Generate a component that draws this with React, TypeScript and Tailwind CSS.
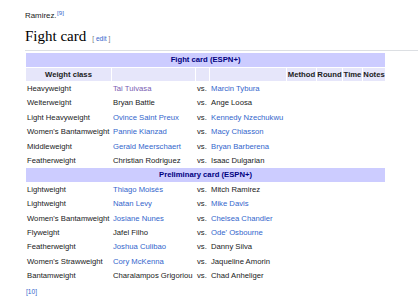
const LINK = "text-[#3366cc]";
const VISITED = "text-[#795cb2]";

type Fighter = { name: string; link?: boolean; visited?: boolean };
type Bout = { weight: string; a: Fighter; b: Fighter };

const main: Bout[] = [
  { weight: "Heavyweight", a: { name: "Tai Tuivasa", visited: true }, b: { name: "Marcin Tybura", link: true } },
  { weight: "Welterweight", a: { name: "Bryan Battle" }, b: { name: "Ange Loosa" } },
  { weight: "Light Heavyweight", a: { name: "Ovince Saint Preux", link: true }, b: { name: "Kennedy Nzechukwu", link: true } },
  { weight: "Women's Bantamweight", a: { name: "Pannie Kianzad", link: true }, b: { name: "Macy Chiasson", link: true } },
  { weight: "Middleweight", a: { name: "Gerald Meerschaert", link: true }, b: { name: "Bryan Barberena", link: true } },
  { weight: "Featherweight", a: { name: "Christian Rodriguez" }, b: { name: "Isaac Dulgarian" } },
];

const prelims: Bout[] = [
  { weight: "Lightweight", a: { name: "Thiago Moisés", link: true }, b: { name: "Mitch Ramirez" } },
  { weight: "Lightweight", a: { name: "Natan Levy", link: true }, b: { name: "Mike Davis", link: true } },
  { weight: "Women's Bantamweight", a: { name: "Josiane Nunes", link: true }, b: { name: "Chelsea Chandler", link: true } },
  { weight: "Flyweight", a: { name: "Jafel Filho" }, b: { name: "Ode' Osbourne", link: true } },
  { weight: "Featherweight", a: { name: "Joshua Culibao", link: true }, b: { name: "Danny Silva" } },
  { weight: "Women's Strawweight", a: { name: "Cory McKenna", link: true }, b: { name: "Jaqueline Amorin" } },
  { weight: "Bantamweight", a: { name: "Charalampos Grigoriou" }, b: { name: "Chad Anheliger" } },
];

function Name({ f }: { f: Fighter }) {
  const color = f.visited ? VISITED : f.link ? LINK : "text-[#202122]";
  return <span className={color}>{f.name}</span>;
}

function BoutRow({ bout }: { bout: Bout }) {
  return (
    <tr className="h-[13.4px]">
      <td className="pl-[1px] whitespace-nowrap">{bout.weight}</td>
      <td className="pl-[1px] whitespace-nowrap"><Name f={bout.a} /></td>
      <td className="pl-[1px] text-[#202122]">vs.</td>
      <td className="pl-[1px] whitespace-nowrap"><Name f={bout.b} /></td>
      <td />
      <td />
      <td />
      <td />
    </tr>
  );
}

function SectionRow({ title }: { title: string }) {
  return (
    <tr className="h-[13.4px]">
      <th colSpan={8} className="bg-[#ccccff] text-[#000080] font-bold text-center">
        {title}
      </th>
    </tr>
  );
}

export default function App() {
  return (
    <div className="w-[418px] h-[300px] overflow-hidden bg-white pl-[25px] font-['Liberation_Sans',Arial,sans-serif] text-[#202122]">
      <p className="mt-[10px] text-[7.9px] leading-[12px]">
        Ramirez.
        <sup className={`${LINK} text-[6.2px] ml-[0.5px]`}>[9]</sup>
      </p>

      {/* section heading */}
      <h2 className="mt-[5px] pb-[2px] border-b border-[#dcdfe3] font-['Liberation_Serif',serif] text-[15px] leading-[18px] text-black flex items-baseline">
        Fight card
        <span className="ml-[6px] text-[6.6px] font-['Liberation_Sans',sans-serif] text-[#72777d]">
          [ <span className={LINK}>edit</span> ]
        </span>
      </h2>

      <table className="mt-[1px] border-separate border-spacing-[1px] table-fixed text-[7.7px] leading-[9px] w-[361px]">
        <colgroup>
          <col className="w-[85px]" />
          <col className="w-[83px]" />
          <col className="w-[13px]" />
          <col className="w-[76px]" />
          <col className="w-[29px]" />
          <col className="w-[25px]" />
          <col className="w-[19px]" />
          <col className="w-[22px]" />
        </colgroup>
        <thead>
          <tr className="h-[13.5px]">
            <th colSpan={8} className="bg-[#ccccff] text-[#000080] font-bold text-center">
              Fight card (ESPN+)
            </th>
          </tr>
          <tr className="h-[13.4px]">
            <th className="bg-[#e6e6fa] font-bold text-center">Weight class</th>
            <th className="bg-[#e6e6fa]" />
            <th className="bg-[#e6e6fa]" />
            <th className="bg-[#e6e6fa]" />
            <th className="bg-[#e6e6fa] font-bold text-center">Method</th>
            <th className="bg-[#e6e6fa] font-bold text-center">Round</th>
            <th className="bg-[#e6e6fa] font-bold text-center">Time</th>
            <th className="bg-[#e6e6fa] font-bold text-center">Notes</th>
          </tr>
        </thead>
        <tbody>
          {main.map((b, i) => (
            <BoutRow key={"m" + i} bout={b} />
          ))}
          <SectionRow title="Preliminary card (ESPN+)" />
          {prelims.map((b, i) => (
            <BoutRow key={"p" + i} bout={b} />
          ))}
        </tbody>
      </table>

      <p className={`${LINK} mt-[4px] text-[6.6px] leading-[10px] pl-[1px]`}>[10]</p>
    </div>
  );
}
